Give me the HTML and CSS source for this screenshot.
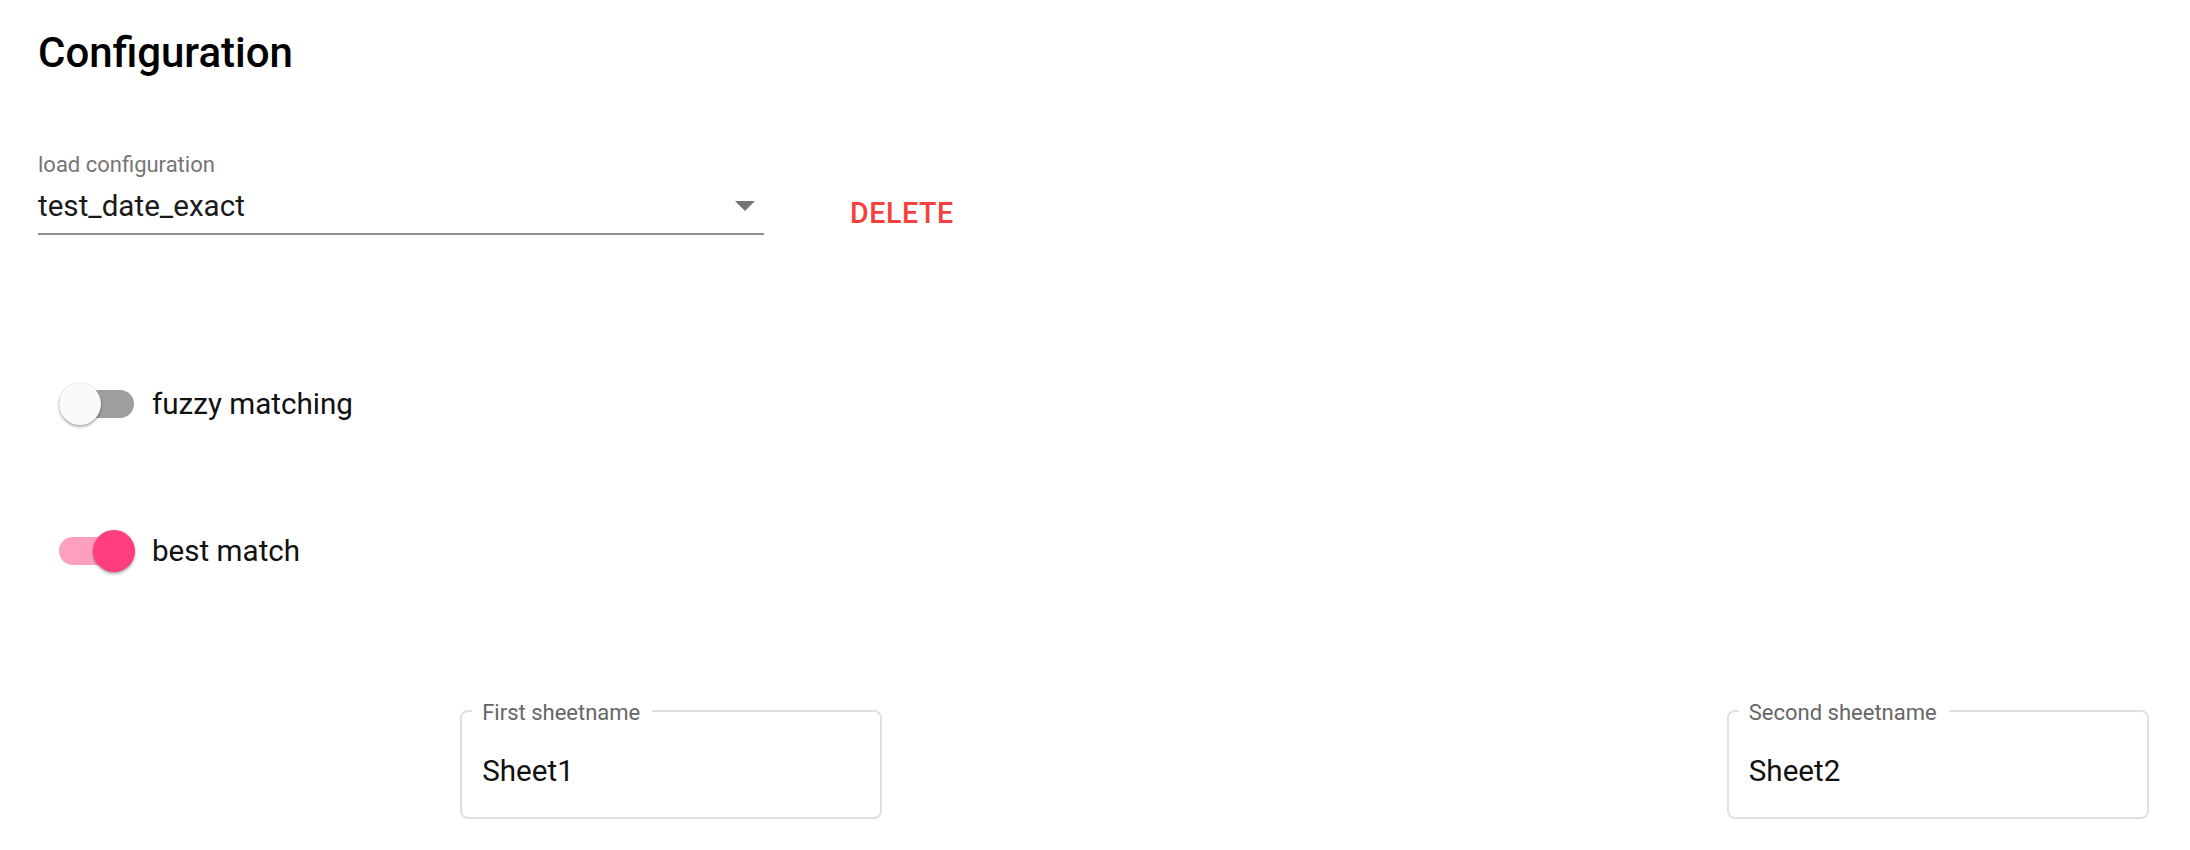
FILE: index.html
```html
<!DOCTYPE html>
<html lang="en">
<head>
    <meta charset="UTF-8">
    <meta name="viewport" content="width=device-width, initial-scale=1.0">
    <title>Configuration</title>
    <link rel="stylesheet" href="styles.css">
</head>
<body>
    <div class="page">
        <h1 class="title">Configuration</h1>

        <div class="config-row">
            <div class="select-field">
                <label class="select-label">load configuration</label>
                <div class="select-input">
                    <span class="select-value">test_date_exact</span>
                    <span class="select-arrow"></span>
                </div>
            </div>
            <button class="delete-btn">Delete</button>
        </div>

        <div class="switch-row first">
            <span class="switch">
                <span class="track"></span>
                <span class="thumb"></span>
            </span>
            <span class="switch-label">fuzzy matching</span>
        </div>

        <div class="switch-row second">
            <span class="switch on">
                <span class="track"></span>
                <span class="thumb"></span>
            </span>
            <span class="switch-label">best match</span>
        </div>

        <div class="sheets">
            <fieldset class="sheet-field col-2">
                <legend>First sheetname</legend>
                <input type="text" value="Sheet1">
            </fieldset>
            <fieldset class="sheet-field col-5">
                <legend>Second sheetname</legend>
                <input type="text" value="Sheet2">
            </fieldset>
        </div>
    </div>
</body>
</html>
```

FILE: styles.css
```css
body {
    margin: 0;
    font-family: Roboto, "Liberation Sans", Arial, sans-serif;
    background: #fff;
    color: #1a1a1a;
}

.page {
    padding: 29px 41px 0 38px;
}

.title {
    margin: 0;
    font-size: 42px;
    line-height: 48px;
    font-weight: 500;
    color: #000;
}

/* load configuration */
.config-row {
    display: flex;
    align-items: flex-end;
    margin-top: 77px;
}

.select-field {
    width: 726px;
    display: flex;
    flex-direction: column;
}

.select-label {
    font-size: 22px;
    line-height: 22px;
    color: #757575;
}

.select-input {
    margin-top: 12px;
    height: 36px;
    padding-bottom: 9px;
    border-bottom: 2px solid #8f8f8f;
    display: flex;
    align-items: center;
    justify-content: space-between;
}

.select-value {
    font-size: 29.6px;
    line-height: 36px;
    color: #1a1a1a;
}

.select-arrow {
    width: 0;
    height: 0;
    margin-right: 9px;
    border-left: 10px solid transparent;
    border-right: 10px solid transparent;
    border-top: 10px solid #757575;
}

.delete-btn {
    margin: 0 0 8px 86px;
    padding: 0;
    border: none;
    background: none;
    font-family: inherit;
    font-size: 28.6px;
    line-height: 28px;
    font-weight: 500;
    letter-spacing: 0.6px;
    text-transform: uppercase;
    color: #f5403d;
    cursor: pointer;
}

/* switches */
.switch-row {
    display: flex;
    align-items: center;
}

.switch-row.first {
    margin-top: 148px;
}

.switch-row.second {
    margin-top: 105px;
}

.switch {
    position: relative;
    width: 76px;
    height: 42px;
    margin-left: 21px;
}

.switch .track {
    position: absolute;
    left: 0;
    top: 7px;
    width: 75px;
    height: 28px;
    border-radius: 14px;
    background: #9e9e9e;
}

.switch .thumb {
    position: absolute;
    left: 0;
    top: 0;
    width: 42px;
    height: 42px;
    border-radius: 50%;
    background: #fafafa;
    box-shadow: 0 2px 3px rgba(0, 0, 0, 0.3), 0 0 2px rgba(0, 0, 0, 0.14);
}

.switch.on .track {
    background: #ff9fc0;
}

.switch.on .thumb {
    left: 34px;
    background: #ff3d7f;
}

.switch-label {
    margin-left: 17px;
    font-size: 29.6px;
    line-height: 36px;
    color: #111;
}

/* sheet names */
.sheets {
    display: grid;
    grid-template-columns: repeat(5, 1fr);
    margin-top: 126px;
}

.sheet-field {
    margin: 0;
    min-width: 0;
    padding: 29px 20px 28px;
    border: 2px solid #e0e0e0;
    border-radius: 8px;
}

.sheet-field legend {
    margin-left: -10px;
    padding: 4px 12px 0 10px;
    font-size: 22px;
    line-height: 22px;
    color: #666;
}

.sheet-field input {
    display: block;
    width: 100%;
    height: 36px;
    padding: 0;
    border: none;
    outline: none;
    background: none;
    font-family: inherit;
    font-size: 29.6px;
    line-height: 36px;
    color: #111;
}

.col-2 {
    grid-column: 2;
}

.col-5 {
    grid-column: 5;
}
```
